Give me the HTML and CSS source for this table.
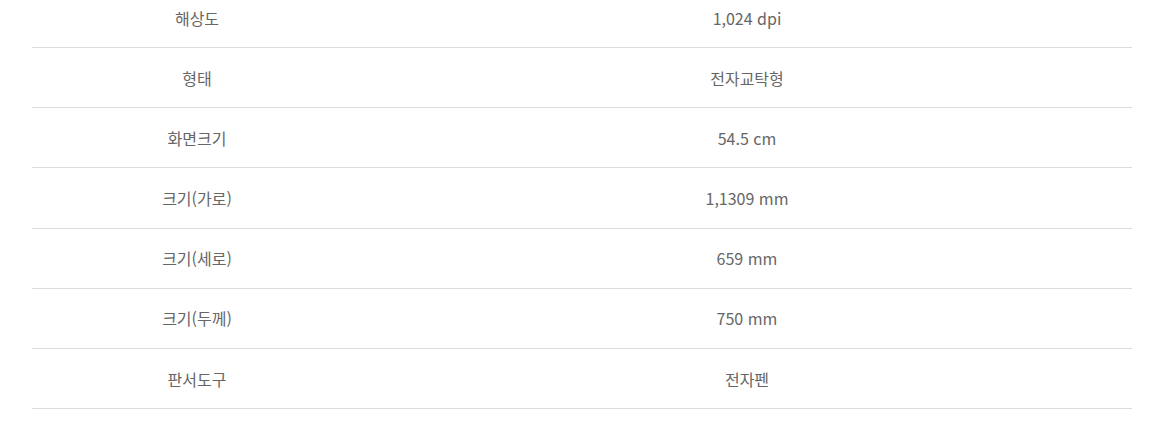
FILE: index.html
```html
<!DOCTYPE html>
<html lang="ko">
<head>
<meta charset="utf-8">
<link rel="stylesheet" href="styles.css">
</head>
<body>
<div class="spec">
  <div class="row"><div class="label">해상도</div><div class="value">1,024 dpi</div></div>
  <div class="row"><div class="label">형태</div><div class="value">전자교탁형</div></div>
  <div class="row"><div class="label">화면크기</div><div class="value">54.5 cm</div></div>
  <div class="row"><div class="label">크기(가로)</div><div class="value">1,1309 mm</div></div>
  <div class="row"><div class="label">크기(세로)</div><div class="value">659 mm</div></div>
  <div class="row"><div class="label">크기(두께)</div><div class="value">750 mm</div></div>
  <div class="row"><div class="label">판서도구</div><div class="value">전자펜</div></div>
</div>
</body>
</html>
```
FILE: styles.css
```css
html, body {
  margin: 0;
  padding: 0;
  background: #fff;
}
body {
  font-family: "Noto Sans CJK KR", "Noto Sans", sans-serif;
  font-size: 16px;
  color: #666;
}
.spec {
  margin: -12px 35px 0 32px;
}
.row {
  display: flex;
  height: 59.17px;
  align-items: center;
  border-bottom: 1px solid #ddd;
}
.label {
  width: 30%;
  text-align: center;
}
.value {
  flex: 1;
  text-align: center;
}
```
